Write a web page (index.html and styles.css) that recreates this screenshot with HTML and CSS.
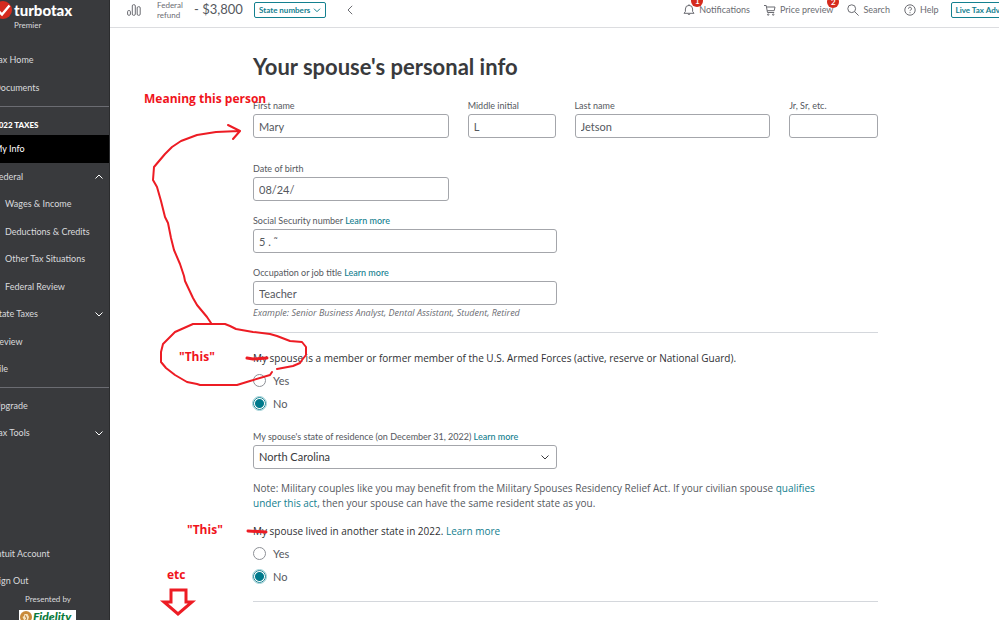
FILE: index.html
```html
<!DOCTYPE html>
<html lang="en">
<head>
<meta charset="utf-8">
<title>Your spouse's personal info</title>
<link rel="stylesheet" href="styles.css">
</head>
<body>
<div class="app">
  <nav class="sidebar" aria-label="Main">
    <div class="brand">
      <svg class="brand-mark" viewBox="0 0 18 18" aria-hidden="true"><circle cx="9" cy="9" r="9" fill="#d52b1e"/><path d="M4 9.500l4 4L15.500 4.500" fill="none" stroke="#fff" stroke-width="2.400"/></svg>
      <div class="brand-name">turbotax</div>
      <div class="brand-tier">Premier</div>
    </div>
    <ul class="nav-list nav-top">
      <li><a href="#">Tax Home</a></li>
      <li><a href="#">Documents</a></li>
    </ul>
    <h2 class="nav-heading">2022 TAXES</h2>
    <a class="nav-current" href="#" aria-current="page">My Info</a>
    <ul class="nav-list nav-taxes">
      <li><button type="button">Federal<svg viewBox="0 0 8 5"><path d="M.5 4.500L4 1l3.500 3.500"/></svg></button></li>
      <li class="sub"><a href="#">Wages &amp; Income</a></li>
      <li class="sub"><a href="#">Deductions &amp; Credits</a></li>
      <li class="sub"><a href="#">Other Tax Situations</a></li>
      <li class="sub"><a href="#">Federal Review</a></li>
      <li><button type="button">State Taxes<svg viewBox="0 0 8 5"><path d="M.5.5L4 4 7.500.5"/></svg></button></li>
      <li><a href="#">Review</a></li>
      <li><a href="#">File</a></li>
    </ul>
    <ul class="nav-list nav-tools">
      <li><a href="#">Upgrade</a></li>
      <li><button type="button">Tax Tools<svg viewBox="0 0 8 5"><path d="M.5.5L4 4 7.500.5"/></svg></button></li>
    </ul>
    <ul class="nav-list nav-account">
      <li><a href="#">Intuit Account</a></li>
      <li><a href="#">Sign Out</a></li>
    </ul>
    <div class="sponsor">
      <div>Presented by</div>
      <div class="sponsor-logo">
        <svg viewBox="0 0 12 12" aria-hidden="true"><circle cx="6" cy="6" r="6" fill="#c98a3a"/><path d="M4 12V9L2.500 6 4 5l.5-2h3L9 6 8 9v3z" fill="#f6e3c0"/><path d="M5.500 4.500l1 3-1.500 3" fill="none" stroke="#a8661c"/></svg>
        <span>Fidelity</span>
      </div>
    </div>
  </nav>

  <div class="page">
    <header class="topbar">
      <svg class="chart" viewBox="0 0 14 12" aria-hidden="true"><rect x=".6" y="6.500" width="2.800" height="4.800" rx="1.200"/><rect x="5.300" y=".7" width="3" height="10.600" rx="1.200"/><rect x="10.200" y="2.700" width="3" height="8.600" rx="1.200"/></svg>
      <div class="refund-label">Federal<br>refund</div>
      <div class="refund">- $3,800</div>
      <button type="button" class="pill">State numbers<svg viewBox="0 0 8 5"><path d="M1 .7l3 3 3-3"/></svg></button>
      <button type="button" class="collapse" aria-label="Collapse"><svg viewBox="0 0 6 10"><path d="M5.200.8L1 5l4.200 4.200"/></svg></button>
      <div class="tools">
        <button type="button" class="tool"><svg viewBox="0 0 12 12"><path d="M1 9.300h10L9.600 7.500V5a3.600 3.600 0 0 0-7.200 0v2.500zM4.800 9.800a1.300 1.300 0 0 0 2.400 0M6 .3v1.200"/></svg>Notifications<span class="badge badge-bell">1</span></button>
        <button type="button" class="tool"><svg viewBox="0 0 12 12"><path d="M0 1.500h2.200l1.300 7h6.700M2.600 3h8.400l-.8 3.700H3.200"/><circle cx="4.200" cy="10.600" r=".7"/><circle cx="9.200" cy="10.600" r=".7"/></svg>Price preview<span class="badge badge-cart">2</span></button>
        <button type="button" class="tool"><svg viewBox="0 0 12 12"><circle cx="4.700" cy="4.700" r="3.900"/><path d="M7.600 7.600l4 4"/></svg>Search</button>
        <button type="button" class="tool"><svg viewBox="0 0 12 12"><circle cx="6" cy="6" r="5.200"/><path d="M4.500 4.700a1.500 1.500 0 1 1 2.200 1.300c-.5.3-.7.5-.7 1.100M6 8.200v1"/></svg>Help</button>
        <button type="button" class="pill live">Live Tax Advice</button>
      </div>
    </header>

    <main class="content">
      <h1>Your spouse's personal info</h1>
      <form>
        <div class="names">
          <div class="field"><label for="first">First name</label><input id="first" value="Mary"></div>
          <div class="field"><label for="mi">Middle initial</label><input id="mi" value="L"></div>
          <div class="field"><label for="last">Last name</label><input id="last" value="Jetson"></div>
          <div class="field"><label for="suffix">Jr, Sr, etc.</label><input id="suffix"></div>
        </div>
        <div class="column">
          <div class="field short"><label for="dob">Date of birth</label><input id="dob" value="08/24/"></div>
          <div class="field medium"><div><label for="ssn">Social Security number</label> <a href="#">Learn more</a></div><input id="ssn" value="5 . ˜"></div>
          <div class="field medium"><div><label for="job">Occupation or job title</label> <a href="#">Learn more</a></div><input id="job" value="Teacher"></div>
        </div>
        <p class="hint">Example: Senior Business Analyst, Dental Assistant, Student, Retired</p>
        <hr>
        <fieldset>
          <legend>My spouse is a member or former member of the U.S. Armed Forces (active, reserve or National Guard).</legend>
          <label class="choice"><input type="radio" name="forces">Yes</label>
          <label class="choice"><input type="radio" name="forces" checked>No</label>
        </fieldset>
        <div class="field medium residence"><div><label for="state">My spouse's state of residence (on December 31, 2022)</label> <a href="#">Learn more</a></div>
          <div class="select"><select id="state"><option>North Carolina</option></select><svg viewBox="0 0 8 5" aria-hidden="true"><path d="M.5.5L4 4 7.500.5"/></svg></div>
        </div>
        <p class="note">Note: Military couples like you may benefit from the Military Spouses Residency Relief Act. If your civilian spouse <a href="#">qualifies under this act</a>, then your spouse can have the same resident state as you.</p>
        <fieldset>
          <legend>My spouse lived in another state in 2022. <a href="#">Learn more</a></legend>
          <label class="choice"><input type="radio" name="lived">Yes</label>
          <label class="choice"><input type="radio" name="lived" checked>No</label>
        </fieldset>
        <hr>
      </form>
    </main>
  </div>

  <div class="markup">
    <svg viewBox="0 0 999 620" width="999" height="620" aria-hidden="true">
      <path d="M211 323L207 317 197 305 193 298 185 281 184 276 180 264 174 250 171 238 168 223 165 217 161 201 157 187 153 180 154 167 165 154 172 147 181 141 197 135 216 132 239 131M228 125L240 131 233 139"/>
      <path d="M272 372L270 375 250 381 237 385H200L197 384 187 382 175 375 166 368 161 362V352L163 344 175 332 193 324H225L230 326 236 329 253 332 270 334 277 336 290 341 302 342 306 347V355L302 360 300 363 293 366 277 369"/>
      <path class="strike" d="M247 358l6 1 14-1M248 531l18 1"/>
      <path class="block" d="M171 590h15v12h6l-14 12-14-12h7z"/>
    </svg>
    <span class="remark person">Meaning this person</span>
    <span class="remark this-one">"This"</span>
    <span class="remark this-two">"This"</span>
    <span class="remark etc">etc</span>
  </div>
</div>
</body>
</html>
```
FILE: styles.css
```css
* { box-sizing: border-box; }

body {
  margin: 0;
  background: #fff;
  color: #55585e;
  font: 10px/14px Lato, "Liberation Sans", sans-serif;
}

a { color: #13808f; text-decoration: none; font-weight: 500; }
button { font: inherit; color: inherit; background: none; border: 0; padding: 0; }
ul, h1, h2, p, fieldset, legend { margin: 0; padding: 0; }
ul { list-style: none; }
fieldset { border: 0; min-width: 0; }
svg { fill: none; stroke: currentColor; flex: none; }

.app { position: relative; display: flex; min-height: 100vh; overflow: hidden; }

/* Sidebar */
.sidebar {
  flex: 0 0 132px;
  height: 100vh;
  margin-left: -22px;
  display: flex;
  flex-direction: column;
  overflow: hidden;
  background: #393a3d;
  border-right: 1px solid #2b2c2e;
  color: #d9dadd;
  font-size: 9px;
}
.sidebar a { color: inherit; font-weight: 400; }
.brand {
  display: grid;
  grid-template-columns: 18px 1fr;
  column-gap: 2px;
  padding: 1px 0 0 16px;
}
.brand-mark { width: 18px; height: 18px; stroke: none; }
.brand-name { color: #fff; font-size: 15px; font-weight: 900; line-height: 18px; }
.brand-tier { grid-column: 2; font-size: 8px; line-height: 12px; }
.nav-list { display: grid; grid-auto-rows: 1fr; }
.nav-list a, .nav-list button {
  display: flex;
  align-items: center;
  justify-content: space-between;
  width: 100%;
  height: 100%;
  padding: 0 6px 0 16px;
  text-align: left;
}
.nav-list .sub a { padding-left: 27px; }
.nav-list svg { width: 8px; height: 5px; stroke: #fff; }
.nav-top { height: 56px; margin-top: 15px; }
.nav-heading {
  margin-top: 4px;
  padding: 11px 0 3px 16px;
  border-top: 1px solid #6b6c72;
  color: #fff;
  font-size: 8px;
  font-weight: 900;
}
.nav-current {
  display: flex;
  align-items: center;
  height: 28px;
  padding-left: 16px;
  background: #000;
}
.sidebar .nav-current { color: #fff; }
.nav-taxes { height: 220px; }
.nav-tools { height: 60px; margin-top: 4px; padding-top: 4px; border-top: 1px solid #6b6c72; }
.nav-account { height: 54px; margin-top: auto; }
.sponsor { padding-left: 41px; font-size: 8px; line-height: 10px; }
.sponsor > div:first-child { padding-left: 6px; }
.sponsor-logo {
  display: flex;
  width: 57px;
  height: 15px;
  margin: 6px 0 -5px;
  background: #fff;
  color: #0a7a3b;
  font: italic 900 12px/14px Lato, sans-serif;
}
.sponsor-logo svg { width: 12px; height: 12px; margin: 1px; stroke: none; }

/* Top bar */
.page { flex: 1; min-width: 0; }
.topbar {
  display: flex;
  align-items: flex-start;
  height: 28px;
  padding-left: 17px;
  border-bottom: 1px solid #dcdde0;
  color: #6b6c72;
  white-space: nowrap;
}
.chart { width: 14px; height: 12px; margin: 4px 16px 0 0; }
.refund-label { width: 37px; font-size: 8px; line-height: 10px; }
.refund { width: 60px; font-size: 13px; line-height: 18px; color: #55585e; }
.pill {
  display: flex;
  align-items: center;
  justify-content: center;
  gap: 3px;
  height: 16px;
  margin-top: 2px;
  padding: 0 4px;
  border: 1px solid #13808f;
  border-radius: 2px;
  color: #13808f;
  font-size: 8px;
  font-weight: 700;
}
.pill svg { width: 8px; height: 5px; }
.collapse { display: flex; margin: 5px 0 0 21px; }
.collapse svg { width: 6px; height: 10px; }
.tools { display: flex; gap: 14px; margin: 0 -16px 0 auto; }
.tool {
  position: relative;
  display: flex;
  align-items: center;
  gap: 4px;
  height: 19px;
  font-size: 9px;
}
.tool svg { width: 12px; height: 12px; }
.tools .pill { margin-left: -2px; }
.badge {
  position: absolute;
  top: -5px;
  width: 12px;
  height: 12px;
  border-radius: 50%;
  background: #d52b1e;
  color: #fff;
  font-size: 8px;
  font-weight: 700;
  line-height: 12px;
  text-align: center;
}
.badge-bell { left: 8px; }
.badge-cart { right: -6px; top: -4px; }

/* Form */
.content { padding: 25px 121px 0 143px; }
h1 { color: #393a3d; font-size: 22px; font-weight: 700; line-height: 28px; }
.names {
  display: grid;
  grid-template-columns: 196fr 88fr 196fr 89fr;
  gap: 19px;
  margin-top: 19px;
}
.field { display: flex; flex-direction: column; gap: 2px; font-size: 9px; line-height: 12px; min-width: 0; }
.field input, .field select {
  width: 100%;
  height: 24px;
  padding: 0 5px;
  border: 1px solid #a4a6ab;
  border-radius: 3px;
  background: #fff;
  color: #55585e;
  font: 11px/14px Lato, sans-serif;
}
.column { display: flex; flex-direction: column; gap: 14px; margin-top: 25px; }
.short { width: 196px; }
.medium { width: 304px; }
.hint, .note, legend { font-family: "Open Sans", "Noto Sans", sans-serif; }
.hint { margin-top: 2px; font-size: 9px; line-height: 12px; font-style: italic; color: #6b6c72; }
hr { margin: 13px 0 18px; border: 0; border-top: 1px solid #d4d7dc; }
legend { color: #2f3033; font-weight: 500; margin-bottom: 4px; }
.choice { display: flex; align-items: center; gap: 7px; height: 23px; font-size: 11px; }
.choice input {
  appearance: none;
  width: 13px;
  height: 13px;
  margin: 0;
  border: 1px solid #8d9096;
  border-radius: 50%;
}
.choice input:checked {
  border-color: #13808f;
  background: radial-gradient(circle, #007a8c 4px, #fff 5px);
  outline: 1px solid #9fd0d6;
}
.residence { margin-top: 16px; }
.select { display: grid; align-items: center; }
.select select { grid-area: 1 / 1; appearance: none; color: #393a3d; }
.select svg { grid-area: 1 / 1; justify-self: end; width: 8px; height: 5px; margin-right: 8px; stroke: #393a3d; pointer-events: none; }
.note { max-width: 570px; margin: 12px 0 13px; line-height: 15px; }

/* Hand-drawn remarks on top of the page */
.markup { position: absolute; top: 0; left: 0; pointer-events: none; color: #ed1c24; }
.markup svg { display: block; stroke-width: 2; stroke-linejoin: round; stroke-linecap: round; }
.markup .strike { stroke-width: 3; }
.markup .block { stroke-width: 3; stroke-linejoin: miter; }
.remark { position: absolute; font: 700 12px/16px "Open Sans", sans-serif; white-space: nowrap; color: #f0141c; }
.person { left: 144px; top: 91px; }
.this-one { left: 179px; top: 349px; }
.this-two { left: 187px; top: 522px; }
.etc { left: 167px; top: 567px; }
```
